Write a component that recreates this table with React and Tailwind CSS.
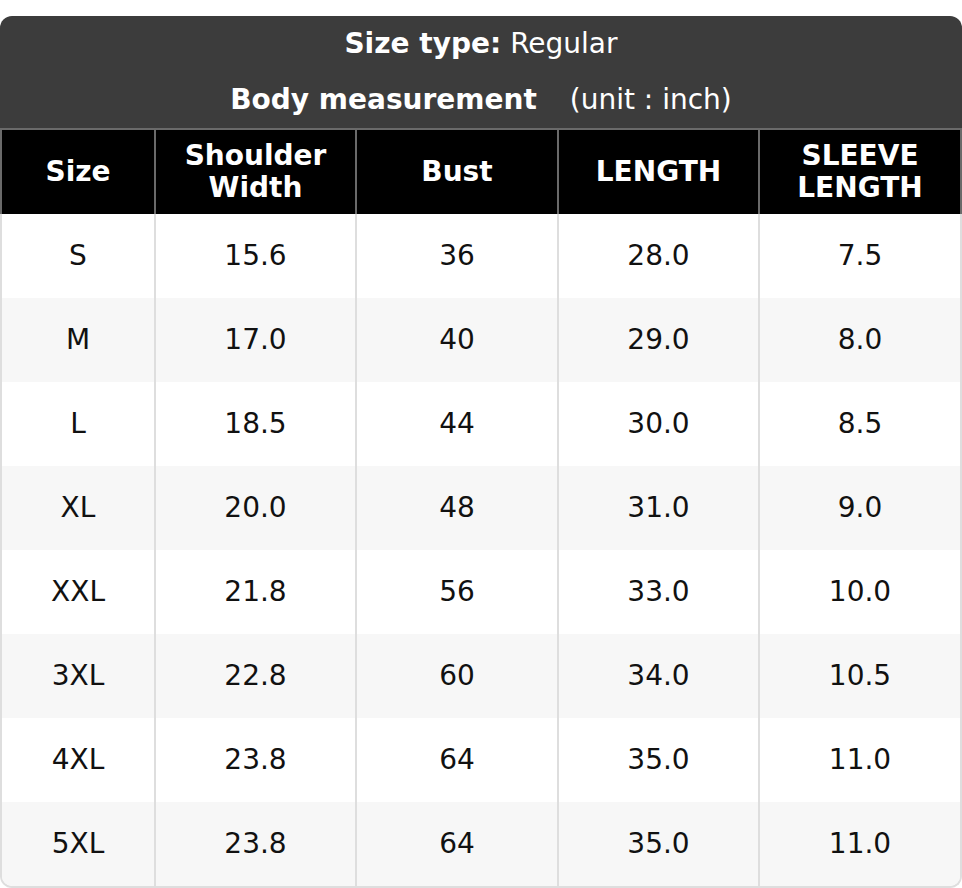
import React from "react";

const rows = [
  ["S", "15.6", "36", "28.0", "7.5"],
  ["M", "17.0", "40", "29.0", "8.0"],
  ["L", "18.5", "44", "30.0", "8.5"],
  ["XL", "20.0", "48", "31.0", "9.0"],
  ["XXL", "21.8", "56", "33.0", "10.0"],
  ["3XL", "22.8", "60", "34.0", "10.5"],
  ["4XL", "23.8", "64", "35.0", "11.0"],
  ["5XL", "23.8", "64", "35.0", "11.0"],
];

const heads = [["Size"], ["Shoulder", "Width"], ["Bust"], ["LENGTH"], ["SLEEVE", "LENGTH"]];

export default function App() {
  return (
    <div className="min-h-screen bg-white pt-4 font-['DejaVu_Sans',sans-serif] text-[28px]">
      <div className="w-[962px]">
        {/* title block */}
        <div className="rounded-t-[12px] bg-[#3c3c3c] text-white">
          <div className="flex h-[56px] items-center justify-center">
            <span className="font-bold">Size type:</span>
            <span className="ml-[9px]">Regular</span>
          </div>
          <div className="flex h-[56px] items-center justify-center">
            <span className="font-bold">Body measurement</span>
            <span className="ml-[33px]">(unit : inch)</span>
          </div>
        </div>

        {/* column heads */}
        <div className="grid h-[86px] grid-cols-[152px_201px_202px_201px_1fr] border-2 border-b-0 border-[#6a6a6a] bg-black text-white">
          {heads.map((h, i) => (
            <div
              key={i}
              className={
                "flex flex-col items-center justify-center font-bold leading-[32px] " +
                (i > 0 ? "border-l-2 border-[#6a6a6a]" : "")
              }
            >
              {h.map((line) => (
                <span key={line}>{line}</span>
              ))}
            </div>
          ))}
        </div>

        {/* body */}
        <div className="overflow-hidden rounded-b-[12px] border-2 border-t-0 border-[#dedede] text-[#111]">
          {rows.map((r, ri) => (
            <div
              key={ri}
              className={
                "grid h-[84px] grid-cols-[152px_201px_202px_201px_1fr] " +
                (ri % 2 === 1 ? "bg-[#f7f7f7]" : "bg-white")
              }
            >
              {r.map((v, ci) => (
                <div
                  key={ci}
                  className={
                    "flex items-center justify-center " +
                    (ci > 0 ? "border-l-2 border-[#dedede]" : "")
                  }
                >
                  {v}
                </div>
              ))}
            </div>
          ))}
        </div>
      </div>
    </div>
  );
}
